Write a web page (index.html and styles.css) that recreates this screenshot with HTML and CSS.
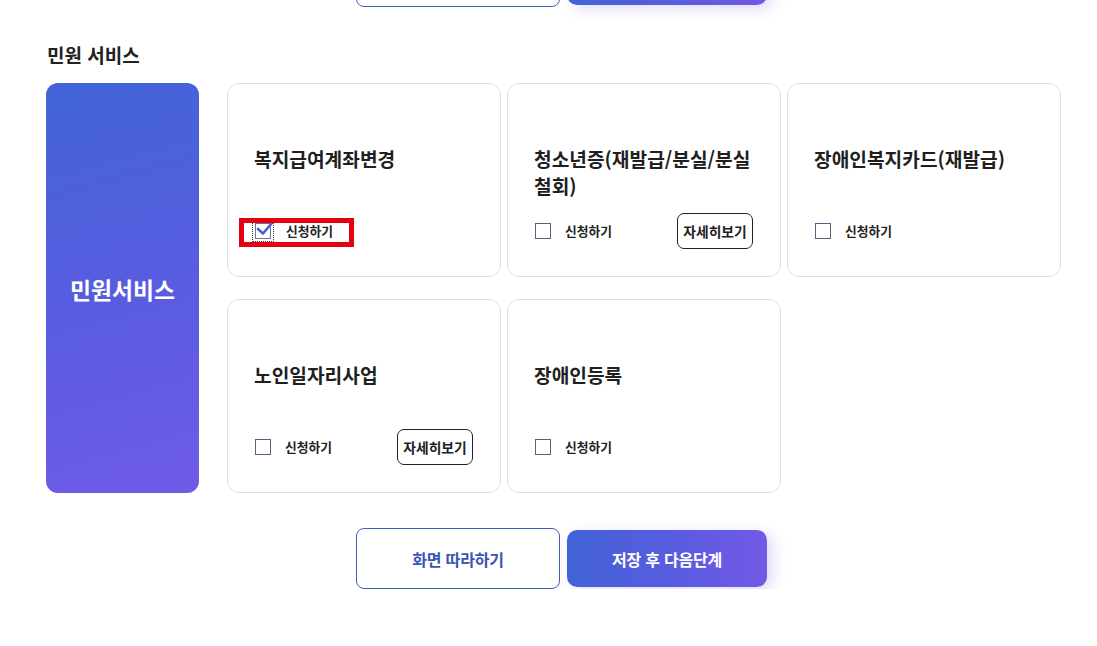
FILE: index.html
```html
<!DOCTYPE html>
<html lang="ko">
<head>
<meta charset="utf-8">
<title>민원 서비스</title>
<link rel="stylesheet" href="styles.css">
</head>
<body>
<div class="page">
  <div class="btn-row btn-row--prev">
    <button class="btn btn-outline" type="button">화면 따라하기</button>
    <button class="btn btn-primary" type="button">저장 후 다음단계</button>
  </div>

  <h2 class="section-title">민원 서비스</h2>

  <div class="service">
    <div class="service-panel">민원서비스</div>
    <div class="service-grid">
      <div class="card">
        <h3 class="card-title">복지급여계좌변경</h3>
        <div class="card-actions">
          <label class="apply apply--marked">
            <span class="checkbox checkbox--checked">
              <svg class="check" viewBox="0 0 20 18" width="20" height="18"><path d="M3 9 L8 13.5 L17 3" fill="none" stroke="#4a60d2" stroke-width="2.6" stroke-linecap="round" stroke-linejoin="round"/></svg>
            </span>
            <span class="apply-text">신청하기</span>
            <span class="highlight"></span>
          </label>
        </div>
      </div>
      <div class="card">
        <h3 class="card-title">청소년증(재발급/분실/분실 철회)</h3>
        <div class="card-actions">
          <label class="apply"><span class="checkbox"></span><span class="apply-text">신청하기</span></label>
          <button class="btn-detail" type="button">자세히보기</button>
        </div>
      </div>
      <div class="card">
        <h3 class="card-title">장애인복지카드(재발급)</h3>
        <div class="card-actions">
          <label class="apply"><span class="checkbox"></span><span class="apply-text">신청하기</span></label>
        </div>
      </div>
      <div class="card">
        <h3 class="card-title">노인일자리사업</h3>
        <div class="card-actions">
          <label class="apply"><span class="checkbox"></span><span class="apply-text">신청하기</span></label>
          <button class="btn-detail" type="button">자세히보기</button>
        </div>
      </div>
      <div class="card">
        <h3 class="card-title">장애인등록</h3>
        <div class="card-actions">
          <label class="apply"><span class="checkbox"></span><span class="apply-text">신청하기</span></label>
        </div>
      </div>
    </div>
  </div>

  <div class="btn-row">
    <button class="btn btn-outline" type="button">화면 따라하기</button>
    <button class="btn btn-primary" type="button">저장 후 다음단계</button>
  </div>
</div>
</body>
</html>
```

FILE: styles.css
```css
* { box-sizing: border-box; }

html, body {
  margin: 0;
  padding: 0;
  background: #ffffff;
  overflow: hidden;
}

body {
  font-family: "Noto Sans CJK KR", "Noto Sans", sans-serif;
  color: #222222;
}

.page {
  padding: 0 20px 0 46px;
}

.btn-row {
  display: flex;
  justify-content: center;
  align-items: center;
  gap: 7px;
  margin-top: 35px;
}

.btn-row--prev {
  margin-top: -54px;
}

.btn {
  font-family: inherit;
  font-size: 16px;
  font-weight: 700;
  cursor: pointer;
  letter-spacing: -0.2px;
}

.btn-outline {
  width: 204px;
  height: 61px;
  background: #ffffff;
  color: #3b55b5;
  border: 1px solid #4360b8;
  border-radius: 8px;
}

.btn-primary {
  width: 200px;
  height: 57px;
  border: none;
  border-radius: 10px;
  color: #ffffff;
  background: linear-gradient(90deg, #4163d8 0%, #5a5be0 55%, #7259e6 100%);
  box-shadow: 6px 4px 14px rgba(110, 100, 220, 0.22);
}

.section-title {
  margin: 35px 0 15px 1px;
  font-size: 19px;
  line-height: 26px;
  font-weight: 700;
  color: #222222;
  letter-spacing: 0;
}

.service {
  display: flex;
  gap: 28px;
}

.service-panel {
  flex: 0 0 153px;
  height: 410px;
  border-radius: 12px;
  background: linear-gradient(165deg, #4264d8 0%, #5a5ce0 55%, #6f5be6 100%);
  color: #ffffff;
  display: flex;
  align-items: center;
  justify-content: center;
  font-size: 22.8px;
  font-weight: 700;
  letter-spacing: 0;
  padding-top: 2px;
}

.service-grid {
  display: grid;
  grid-template-columns: repeat(3, 274px);
  grid-auto-rows: 194px;
  column-gap: 6px;
  row-gap: 22px;
}

.card {
  border: 1px solid #dedede;
  border-radius: 12px;
  padding: 62px 26px 0 26px;
  background: #ffffff;
}

.card-title {
  margin: 0;
  height: 54px;
  font-size: 19.2px;
  line-height: 27px;
  font-weight: 700;
  color: #1f1f1f;
  letter-spacing: 0;
  word-break: keep-all;
}

.card-actions {
  margin-top: 13px;
  height: 36px;
  display: flex;
  align-items: center;
  justify-content: space-between;
}

.apply {
  position: relative;
  display: flex;
  align-items: center;
  gap: 14px;
  height: 16px;
  margin-left: 1px;
}

.checkbox {
  position: relative;
  width: 16px;
  height: 16px;
  border: 1px solid #56627e;
  background: #ffffff;
}

.checkbox--checked {
  border-color: #6a7591;
  outline: 1px dotted #333333;
  outline-offset: 2px;
}

.check {
  position: absolute;
  left: -1px;
  top: -4px;
}

.apply-text {
  font-size: 12.8px;
  font-weight: 700;
  color: #222222;
  line-height: 16px;
}

.apply--marked .apply-text {
  margin-left: 1px;
}

.highlight {
  position: absolute;
  left: -16px;
  top: -5px;
  width: 115px;
  height: 29px;
  border: 5px solid #e3000f;
  pointer-events: none;
}

.btn-detail {
  width: 76px;
  height: 36px;
  margin-right: 1px;
  background: #ffffff;
  border: 1px solid #222222;
  border-radius: 7px;
  font-family: inherit;
  font-size: 13.8px;
  font-weight: 700;
  color: #222222;
  padding: 0;
  letter-spacing: 0;
}
```
